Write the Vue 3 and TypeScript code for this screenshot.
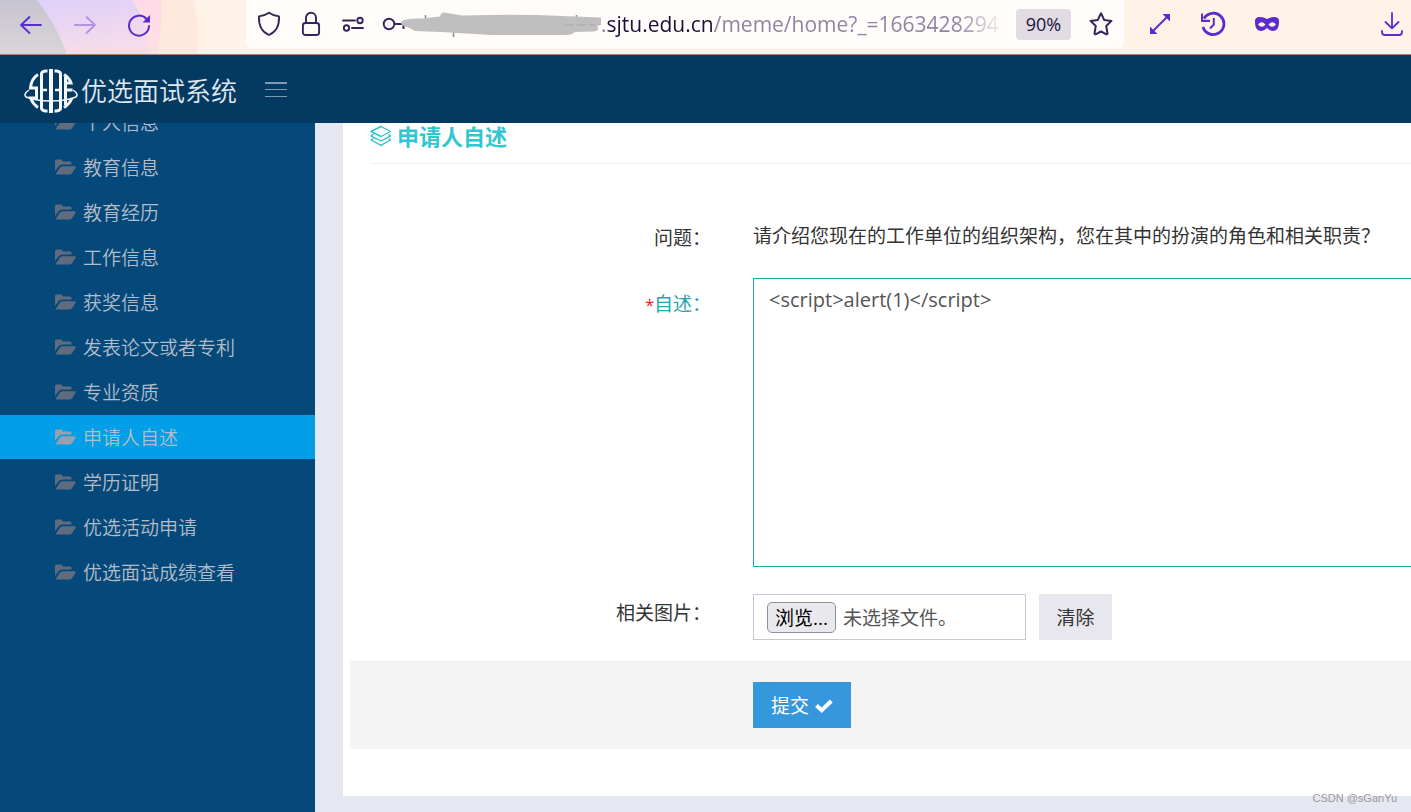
<script setup lang="ts">
import { ref } from 'vue'

interface MenuItem {
  label: string
  active?: boolean
}

const menu: MenuItem[] = [
  { label: '个人信息' },
  { label: '教育信息' },
  { label: '教育经历' },
  { label: '工作信息' },
  { label: '获奖信息' },
  { label: '发表论文或者专利' },
  { label: '专业资质' },
  { label: '申请人自述', active: true },
  { label: '学历证明' },
  { label: '优选活动申请' },
  { label: '优选面试成绩查看' },
]

const statement = ref('<script>alert(1)<' + '/script>')
</script>

<template>
  <div class="window">
    <div class="toolbar">
      <svg class="theme" width="250" height="54" viewBox="0 0 250 54" aria-hidden="true">
        <defs>
          <linearGradient id="g1" x1="0" y1="0" x2="0" y2="1"><stop offset="0" stop-color="#c7c4d1" /><stop offset="1" stop-color="#dad5d7" /></linearGradient>
          <linearGradient id="g2" x1="0" y1="0" x2="0.3" y2="1"><stop offset="0" stop-color="#dccffb" /><stop offset="1" stop-color="#f6dcea" /></linearGradient>
          <linearGradient id="g3" x1="0" y1="0" x2="0" y2="1"><stop offset="0" stop-color="#ffdae6" /><stop offset="1" stop-color="#fde0e2" /></linearGradient>
        </defs>
        <path d="M0 0H194Q200 26 197 54H0Z" fill="#ffe9dc" />
        <path d="M0 0H161Q163 28 157 54H0Z" fill="url(#g3)" />
        <path d="M0 0H132Q149 26 148 54H0Z" fill="url(#g2)" />
        <path d="M0 0H37Q57 26 67 54H0Z" fill="url(#g1)" />
      </svg>
      <div class="nav">
        <button class="tool" type="button" aria-label="后退">
          <svg width="24" height="24" viewBox="0 0 24 24" fill="none" stroke="#5b2bd0" stroke-width="1.8" stroke-linecap="round" stroke-linejoin="round"><path d="M22 12H2M10.500 4L2 12l8.500 8" /></svg>
        </button>
        <button class="tool" type="button" aria-label="前进">
          <svg width="24" height="24" viewBox="0 0 24 24" fill="none" stroke="#b093e4" stroke-width="1.800" stroke-linecap="round" stroke-linejoin="round"><path d="M2 12h20M13.500 4L22 12l-8.500 8" /></svg>
        </button>
        <button class="tool" type="button" aria-label="刷新">
          <svg width="24" height="24" viewBox="0 0 24 24" fill="none" stroke="#5b2bd0" stroke-width="2"><path d="M19.500 6A10 10 0 1 0 22 13" stroke-linecap="round" /><path d="M23 2v7.500H15.500z" fill="#5b2bd0" stroke="none" /></svg>
        </button>
      </div>
      <div class="address">
        <svg class="shield" width="24" height="26" viewBox="0 0 24 26" fill="none" stroke="#33265a" stroke-width="1.900" stroke-linejoin="round"><path d="M12 1.800C9 4 5.500 5 2 5.400C1.600 13 4 20.500 12 24C20 20.500 22.400 13 22 5.400C18.500 5 15 4 12 1.800Z" /></svg>
        <svg class="lock" width="20" height="26" viewBox="0 0 20 26" fill="none" stroke="#33265a" stroke-width="1.900"><rect x="1.900" y="12" width="16.200" height="12" rx="2.500" /><path d="M5 12V6.800a5 5 0 0 1 10 0V12" /></svg>
        <svg class="perm" width="24" height="20" viewBox="0 0 24 20" fill="none" stroke="#33265a" stroke-width="1.900" stroke-linecap="round"><path d="M2 6.500h12M11 14h11" /><circle cx="19" cy="6.500" r="2.700" /><circle cx="5.500" cy="14" r="2.700" /></svg>
        <svg class="scribble" width="220" height="34" viewBox="0 0 220 34" fill="none">
          <circle cx="8" cy="17" r="5.300" stroke="#33265a" stroke-width="1.900" />
          <path d="M13.500 17h12M22.500 17v5" stroke="#33265a" stroke-width="1.900" />
          <path d="M44.500 8v10M72.500 25v5M195.500 8v8" stroke="#8d86a5" stroke-width="1.500" />
          <path d="M21 14Q25 11 41 11.500L59 9.500Q60 4 66 6L81 8.500Q140 7 181 9L220 10.500Q226 12 220 18L216 19Q220 24 212 24.500L194 25Q190 28.500 184 28L110 28L60 25L34 24Q30 21 23 19Q18 17 21 14Z" fill="#bfbfbf" />
          <path d="M184 18h30" stroke="#a7a5ae" stroke-width="1" stroke-dasharray="9 3" />
        </svg>
        <div class="url"><span class="dot">.</span><span class="host">sjtu.edu.cn</span>/meme/home?_=1663428294</div>
        <button class="zoom" type="button">90%</button>
        <button class="tool star" type="button" aria-label="收藏">
          <svg width="26" height="26" viewBox="0 0 26 26" fill="none" stroke="#33265a" stroke-width="2" stroke-linejoin="round"><path d="M13 2.300L16.200 8.900L23.500 9.900L18.200 15L19.500 22.300Q19.500 23.700 18 23.200L13 20.500L8 23.200Q6.500 23.700 6.500 22.300L7.800 15L2.500 9.900L9.800 8.900Z" /></svg>
        </button>
      </div>
      <div class="extras">
        <button class="tool" type="button" aria-label="全屏"><svg width="24" height="24" viewBox="0 0 24 24" fill="#5b2bd0"><path d="M14.500 2H22v7.500zM2 14.500V22h7.500z" /><path d="M4 20L20 4" stroke="#5b2bd0" stroke-width="2" /></svg></button>
        <button class="tool" type="button" aria-label="历史"><svg width="26" height="26" viewBox="0 0 26 26" fill="none" stroke="#5b2bd0"><path d="M4 7.500A10.700 10.700 0 1 1 3 16" stroke-width="2.800" /><path d="M2 2.500V9.700h7.500" stroke-width="2" /><path d="M13.800 7v6.500L10 17.500M10 10h-8" stroke-width="2" /></svg></button>
        <button class="tool" type="button" aria-label="隐私"><svg width="26" height="18" viewBox="0 0 26 18"><path fill="#5b2bd0" fill-rule="evenodd" d="M1 6Q1 2 6 2Q10 2 13 4Q16 2 20 2Q25 2 25 6Q25.500 16 18.500 16Q16 16 13 13Q10 16 7.500 16Q.5 16 1 6ZM4 9.500Q8 14 11.500 9.500Q7.500 5 4 9.500ZM14.500 9.500Q18 14 22 9.500Q18.500 5 14.500 9.500Z" /></svg></button>
        <button class="tool download" type="button" aria-label="下载"><svg width="24" height="26" viewBox="0 0 24 26" fill="none" stroke="#5b2bd0" stroke-width="1.800" stroke-linecap="round" stroke-linejoin="round"><path d="M12 2v15M5.500 11L12 17.300L18.500 11M2 20V21q0 3 3 3h14q3 0 3-3v-1" /></svg></button>
      </div>
    </div>

    <header class="header">
      <svg class="logo" width="54" height="44" viewBox="0 0 54 44" fill="none" stroke="#f4f8fb">
        <path d="M27 0v44" stroke-width="4" />
        <path d="M23.500 2H21.500Q17.500 2.500 17.500 5V39Q17.500 41.500 21.500 42H23.500M30.500 2H32.500Q36.500 2.500 36.500 5V39Q36.500 41.500 32.500 42H30.500" stroke-width="3" />
        <path d="M18 21h5M31 21h5" stroke-width="2.500" />
        <path d="M14 5.500Q7 10 6.500 19H12.500V29H6.500Q9 35 14 38.500M40 5.500Q45.500 9 47 14H41M41 21H48.500M48 29Q45.500 35 40 38.500M41.500 8V36" stroke-width="3" />
        <path d="M5 21Q-1 25 2 28Q12 32 27 32Q42 32 52 28Q55 25 49 21" stroke-width="1.500" />
      </svg>
      <span class="brand">优选面试系统</span>
      <button class="tool" type="button" aria-label="菜单"><svg width="22" height="18" viewBox="0 0 22 18" fill="#7e99b2"><path d="M0 0h22v2H0zM0 7h22v1H0zM0 14h22v1H0z" /></svg></button>
    </header>

    <div class="body">
      <nav class="sidebar">
        <ul>
          <li v-for="item in menu" :key="item.label">
            <a href="#" :class="{ active: item.active }">
              <svg width="21" height="16" viewBox="0 0 21 16" fill="currentColor" aria-hidden="true"><path d="M0 12V2Q0 .5 1.500 .5H6Q7.500 .5 7.500 2V2.500H15Q16.500 2.500 16.500 4V5.500H7.500Q5 5.500 3.500 7.300Z" /><path d="M1 14.500Q.5 15.500 2 15.500H14.500Q16 15.500 17 14.200L20.500 9Q21.200 7.200 19.500 7.200H8Q6.200 7.200 5 8.600Z" /></svg>
              <span>{{ item.label }}</span>
            </a>
          </li>
        </ul>
      </nav>

      <main class="main">
        <section class="panel">
          <h1 class="title">
            <svg width="22" height="22" viewBox="0 0 22 22" fill="none" stroke="#32c0cb" stroke-width="1.400" stroke-linejoin="round"><path d="M11 1.500L20.500 6.500L11 11.500L1 6.500Z" /><path d="M3.500 9.200L1 10.800L11 16L20.500 10.800L18.500 9.200M3.500 13.500L1 15L11 20.300L20.500 15L18.500 13.500" /></svg>
            <span>申请人自述</span>
          </h1>
          <form @submit.prevent>
            <div class="row question">
              <span class="label">问题：</span>
              <p>请介绍您现在的工作单位的组织架构，您在其中的扮演的角色和相关职责？</p>
            </div>
            <div class="row statement">
              <label class="label" for="statement"><span class="star-mark">*</span>自述：</label>
              <textarea id="statement" v-model="statement" spellcheck="false"></textarea>
            </div>
            <div class="row upload">
              <label class="label" for="picture">相关图片：</label>
              <label class="file">
                <input id="picture" type="file" accept="image/*" />
                <span class="browse">浏览...</span>
                <span class="filename">未选择文件。</span>
              </label>
              <button class="clear" type="reset">清除</button>
            </div>
            <div class="actions">
              <button class="submit" type="submit">
                提交
                <svg width="18" height="14" viewBox="0 0 18 14" fill="none" stroke="#fff" stroke-width="4"><path d="M1.500 6.500L6.700 11.200L16.300 2" /></svg>
              </button>
            </div>
          </form>
        </section>
      </main>
    </div>
    <div class="watermark">CSDN @sGanYu</div>
  </div>
</template>

<style>
body {
  margin: 0;
}
</style>

<style scoped>
* {
  box-sizing: border-box;
}
.window {
  position: relative;
  display: flex;
  flex-direction: column;
  height: 100vh;
  overflow: hidden;
  background: #e5e8f1;
  color: #333;
  font: 19px/28px 'Open Sans', 'Noto Sans CJK SC', sans-serif;
}
button,
textarea {
  font: inherit;
}
.tool {
  display: flex;
  padding: 0;
  border: 0;
  background: none;
}
.toolbar {
  position: relative;
  display: flex;
  flex: none;
  height: 55px;
  background: #fff2e6;
  border-bottom: 1px solid #a98576;
}
.theme {
  position: absolute;
  left: 0;
  top: 0;
}
.nav {
  position: relative;
  display: flex;
  align-items: center;
  gap: 30px;
  width: 246px;
  height: 50px;
  padding-left: 19px;
}
.address {
  position: relative;
  display: flex;
  align-items: center;
  width: 878px;
  height: 48px;
  padding-left: 11px;
  background: #fffcfa;
  border-radius: 0 0 6px 6px;
}
.lock {
  margin-left: 20px;
}
.perm {
  margin-left: 20px;
}
.scribble {
  margin-left: 16px;
}
.url {
  flex: 1;
  overflow: hidden;
  color: #8d86a5;
  font-size: 21px;
  line-height: 32px;
  white-space: nowrap;
  mask-image: linear-gradient(to right, #000 calc(100% - 50px), transparent);
}
.host {
  color: #1c0f3d;
}
.zoom {
  width: 55px;
  height: 31px;
  margin-left: 10px;
  padding: 0;
  border: 0;
  border-radius: 4px;
  background: #e1dce3;
  color: #1c0f3d;
  font-size: 18px;
}
.star {
  margin: 0 10px 0 17px;
}
.extras {
  display: flex;
  flex: 1;
  align-items: center;
  gap: 28px;
  height: 48px;
  padding: 0 7px 0 24px;
}
.download {
  margin-left: auto;
}
.header {
  display: flex;
  flex: none;
  align-items: center;
  height: 68px;
  padding: 4px 0 0 24px;
  background: #043962;
}
.brand {
  margin: 0 28px 0 3px;
  color: #dfe8ef;
  font-size: 26px;
  font-weight: 350;
  line-height: 40px;
}
.body {
  display: flex;
  flex: 1;
  min-height: 0;
}
.sidebar {
  flex: none;
  width: 315px;
  overflow: hidden;
  background: #05497b;
}
.sidebar ul {
  margin: -23px 0 0;
  padding: 0;
  list-style: none;
}
.sidebar a {
  display: flex;
  align-items: center;
  gap: 7px;
  height: 44px;
  margin-bottom: 1px;
  padding-left: 55px;
  color: #606c7e;
  font-weight: 350;
  text-decoration: none;
}
.sidebar a span {
  padding-top: 2px;
  color: #b4bcc8;
}
.sidebar a.active {
  background: #009fe8;
  color: #9a9fae;
}
.main {
  flex: 1;
  min-width: 0;
  overflow: hidden;
  padding-left: 28px;
}
.panel {
  padding: 0 0 47px 7px;
  background: #fff;
}
.title {
  display: flex;
  align-items: center;
  gap: 5px;
  height: 41px;
  margin: 0 0 49px 20px;
  padding-bottom: 14px;
  border-bottom: 1px solid #eef1f5;
  color: #32c5d2;
  font-size: 22px;
  font-weight: 700;
}
.row {
  display: flex;
  align-items: flex-start;
}
.label {
  flex: none;
  width: 361px;
  margin-right: 42px;
  text-align: right;
}
.question {
  height: 46px;
  margin-bottom: 19px;
}
.question .label {
  padding-top: 11px;
}
.question p {
  margin: 0;
  padding-top: 9px;
  white-space: nowrap;
}
.statement {
  margin-bottom: 27px;
}
.statement .label {
  padding-top: 12px;
  color: #27a4b0;
}
.star-mark {
  color: #e02222;
  font-size: 16px;
}
textarea {
  flex: 1;
  height: 289px;
  padding: 7px 15px;
  border: 1px solid #27a4b0;
  border-right: 0;
  outline: 0;
  resize: none;
  color: #555;
  background: #fff;
  font-size: 20px;
}
.upload {
  margin-bottom: 21px;
}
.upload .label {
  padding-top: 5px;
}
.file {
  position: relative;
  display: flex;
  align-items: center;
  gap: 7px;
  width: 273px;
  height: 46px;
  padding-left: 13px;
  border: 1px solid #c2cad8;
  color: #555;
}
.file input {
  position: absolute;
  inset: 0;
  width: 100%;
  opacity: 0;
}
.browse {
  width: 69px;
  height: 31px;
  padding-top: 1px;
  border: 1px solid #8f8f9d;
  border-radius: 5px;
  background: #e9e9ed;
  color: #000;
  text-align: center;
}
.filename {
  padding-top: 2px;
}
.clear {
  width: 73px;
  height: 46px;
  margin-left: 13px;
  padding: 2px 0 0;
  border: 0;
  background: #e7e7ed;
  color: #333;
}
.actions {
  padding: 20px 0 21px 403px;
  border-top: 1px solid #e7ecf1;
  background: #f4f4f4;
}
.submit {
  display: flex;
  align-items: center;
  justify-content: center;
  gap: 6px;
  width: 98px;
  height: 46px;
  padding: 2px 0 0;
  border: 0;
  background: #3598dc;
  color: #fff;
}
.watermark {
  position: absolute;
  right: 14px;
  bottom: 6px;
  color: #999;
  font: 11px/16px 'Liberation Sans', sans-serif;
}
</style>
